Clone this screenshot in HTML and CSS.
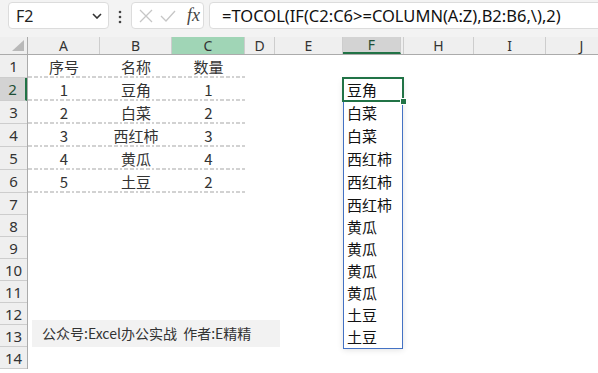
FILE: index.html
```html
<!DOCTYPE html>
<html lang="zh-CN">

<head>
    <meta charset="UTF-8">
    <title>TOCOL - Excel</title>
    <link rel="stylesheet" href="styles.css">
</head>

<body>
    <!-- formula bar -->
    <div class="toolbar">
        <div class="namebox">
            <span class="ref">F2</span>
            <svg class="chev" width="10" height="6" viewBox="0 0 10 6"><path d="M1 1l4 4 4-4" fill="none" stroke="#333" stroke-width="1.6"/></svg>
        </div>
        <svg class="dots" width="4" height="14" viewBox="0 0 4 14"><circle cx="2" cy="2" r="1.3"/><circle cx="2" cy="7" r="1.3"/><circle cx="2" cy="12" r="1.3"/></svg>
        <div class="fxbox">
            <svg width="14" height="14" viewBox="0 0 14 14"><path d="M1 1l12 12M13 1L1 13" stroke="#c6c6c6" stroke-width="1.3"/></svg>
            <svg width="16" height="12" viewBox="0 0 16 12"><path d="M1 6l5 5L15 1" fill="none" stroke="#c6c6c6" stroke-width="1.3"/></svg>
            <span class="fx">fx</span>
        </div>
        <div class="formula">=TOCOL(IF(C2:C6&gt;=COLUMN(A:Z),B2:B6,\),2)</div>
    </div>

    <!-- sheet -->
    <div class="sheet">
        <div class="corner">
            <svg width="12" height="11" viewBox="0 0 12 11"><path d="M12 0V11H0z" fill="#b9b9b9"/></svg>
        </div>

        <div class="colhdrs">
            <div class="ch">A</div>
            <div class="ch">B</div>
            <div class="ch ch-green">C</div>
            <div class="ch">D</div>
            <div class="ch">E</div>
            <div class="ch ch-sel">F</div>
            <div class="ch ch-hidden"></div>
            <div class="ch">H</div>
            <div class="ch">I</div>
            <div class="ch">J</div>
        </div>

        <div class="rowhdrs">
            <div class="rh">1</div>
            <div class="rh rh-sel">2</div>
            <div class="rh">3</div>
            <div class="rh">4</div>
            <div class="rh">5</div>
            <div class="rh">6</div>
            <div class="rh">7</div>
            <div class="rh">8</div>
            <div class="rh">9</div>
            <div class="rh">10</div>
            <div class="rh">11</div>
            <div class="rh">12</div>
            <div class="rh">13</div>
            <div class="rh">14</div>
        </div>

        <div class="cells">
            <div class="tbl">
                <div class="trow"><span>序号</span><span>名称</span><span>数量</span></div>
                <div class="trow"><span>1</span><span>豆角</span><span>1</span></div>
                <div class="trow"><span>2</span><span>白菜</span><span>2</span></div>
                <div class="trow"><span>3</span><span>西红柿</span><span>3</span></div>
                <div class="trow"><span>4</span><span>黄瓜</span><span>4</span></div>
                <div class="trow"><span>5</span><span>土豆</span><span>2</span></div>
            </div>

            <div class="spill">
                <div class="item">豆角</div>
                <div class="item">白菜</div>
                <div class="item">白菜</div>
                <div class="item">西红柿</div>
                <div class="item">西红柿</div>
                <div class="item">西红柿</div>
                <div class="item">黄瓜</div>
                <div class="item">黄瓜</div>
                <div class="item">黄瓜</div>
                <div class="item">黄瓜</div>
                <div class="item">土豆</div>
                <div class="item">土豆</div>
                <div class="active"><div class="handle"></div></div>
            </div>

            <div class="note">公众号:Excel办公实战&nbsp;&nbsp;作者:E精精</div>
        </div>
    </div>
</body>

</html>
```

FILE: styles.css
```css
* {
    margin: 0;
    padding: 0;
    box-sizing: border-box;
}

body {
    width: 598px;
    height: 373px;
    overflow: hidden;
    background: #fff;
    font-family: "Noto Sans", "Noto Sans CJK SC", sans-serif;
    color: #222;
}

/* formula bar */
.toolbar {
    display: flex;
    align-items: flex-start;
    height: 37px;
    padding: 2px 0 0 8px;
    background: #f3f3f3;
}

.namebox,
.fxbox,
.formula {
    height: 27px;
    background: #fff;
    border: 1px solid #dcdcdc;
    border-radius: 4px;
}

.namebox {
    display: flex;
    align-items: center;
    justify-content: space-between;
    width: 101px;
    padding: 0 6px 0 7px;
}

.ref {
    font-size: 16px;
}

.dots {
    margin: 8px 9px 0 9px;
    fill: #444;
}

.fxbox {
    display: flex;
    align-items: center;
    gap: 7px;
    width: 73px;
    margin-right: 5px;
    padding-left: 7px;
}

.fx {
    font-family: "Liberation Serif", serif;
    font-style: italic;
    font-size: 18px;
    color: #444;
    margin-left: 4px;
}

.formula {
    flex: 1;
    margin-right: -10px;
    padding-left: 12px;
    font-size: 16.5px;
    line-height: 25px;
    color: #111;
    white-space: nowrap;
}

/* sheet */
.sheet {
    display: grid;
    grid-template-columns: 28px 1fr;
    grid-template-rows: 18px auto;
    font-family: "Noto Sans CJK SC", sans-serif;
}

.corner {
    display: flex;
    justify-content: flex-end;
    align-items: flex-end;
    padding: 0 3px 3px 0;
    background: #efefef;
    border-right: 1px solid #ababab;
    border-bottom: 1px solid #ababab;
}

.colhdrs,
.cells {
    display: grid;
    grid-template-columns: 72px 72px 73px 30px 68px 58px 3px 70px 72px 72px;
}

.colhdrs {
    background: #efefef;
    border-bottom: 1px solid #ababab;
}

.ch {
    border-right: 1px solid #cdcdcd;
    text-align: center;
    font-family: "Noto Sans", sans-serif;
    font-size: 14px;
    line-height: 17px;
    color: #333;
}

.ch-green {
    background: #a0d5b6;
}

.ch-sel {
    background: #d3d3d3;
    border-bottom: 2px solid #217346;
    line-height: 15px;
    color: #1f4f36;
}

.rowhdrs,
.cells {
    grid-template-rows: repeat(6, 23px) repeat(8, 22px);
}

.rowhdrs {
    display: grid;
    background: #efefef;
    border-right: 1px solid #ababab;
}

.rh {
    border-bottom: 1px solid #cdcdcd;
    text-align: center;
    font-family: "Noto Sans", sans-serif;
    font-size: 15px;
    line-height: 22px;
    color: #333;
}

.rh-sel {
    background: #d3d3d3;
    border-right: 2px solid #217346;
    color: #1f4f36;
}

/* data block A1:C6 */
.tbl {
    grid-column: 1 / 4;
    grid-row: 1 / 7;
    display: grid;
    grid-template-rows: repeat(6, 23px);
}

.trow {
    display: grid;
    grid-template-columns: 72px 72px 73px;
    align-items: center;
    text-align: center;
    font-size: 15px;
    color: #333;
    background: repeating-linear-gradient(to right, #d2d2d2 0 4px, transparent 4px 6px, #d2d2d2 6px 10px, transparent 10px 12px, #d2d2d2 12px 14px, transparent 14px 16px) bottom / 100% 2px no-repeat;
}

/* spill range F2:F13 */
.spill {
    grid-column: 6;
    grid-row: 2 / 14;
    position: relative;
    width: 60px;
    display: grid;
    grid-template-rows: repeat(5, 23px) repeat(7, 22px);
    align-self: start;
    margin-top: 1px;
    border: 1px solid #4472c4;
    border-top: none;
    box-shadow: 0 1px 6px rgba(0, 0, 0, 0.12);
    background: #fff;
}

.item {
    padding-left: 3px;
    font-size: 15px;
    line-height: 22px;
    color: #111;
}

.active {
    position: absolute;
    left: -2px;
    top: -2px;
    width: 62px;
    height: 25px;
    border: 2px solid #217346;
}

.handle {
    position: absolute;
    right: -5px;
    bottom: -5px;
    width: 7px;
    height: 7px;
    background: #217346;
    border: 1px solid #fff;
}

/* text box */
.note {
    grid-column: 1 / 6;
    grid-row: 12 / 14;
    align-self: end;
    width: 248px;
    height: 27px;
    margin-left: 4px;
    padding-left: 10px;
    background: #f2f2f2;
    font-size: 14px;
    line-height: 26px;
    color: #333;
}
```
